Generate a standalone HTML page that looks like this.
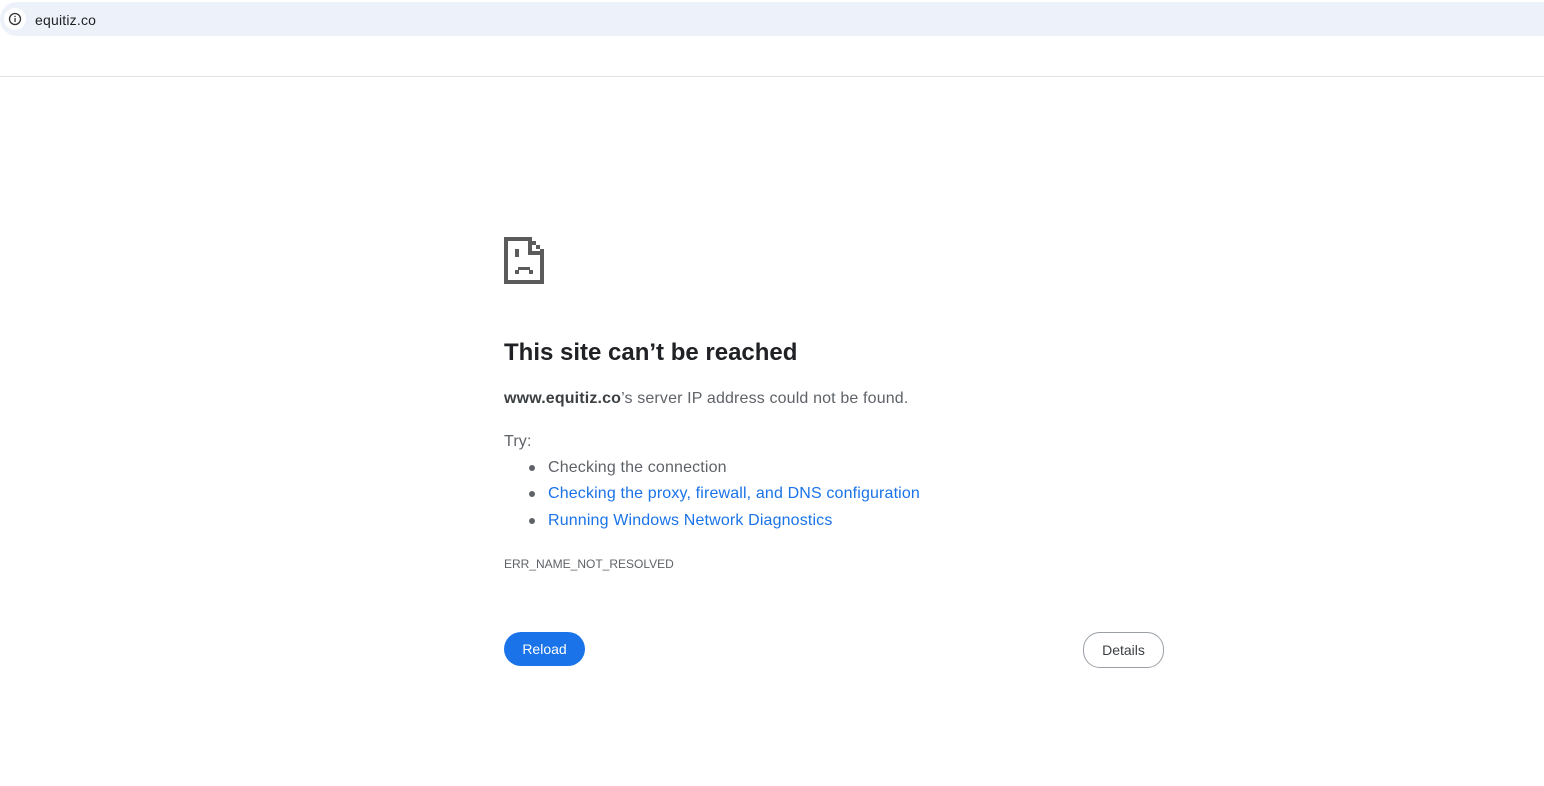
<!DOCTYPE html>
<html><head><style>
body{margin:0;width:1544px;height:786px;background:#fff;font-family:"Liberation Sans",sans-serif;position:relative;overflow:hidden}
.bar{position:absolute;left:0;top:2px;width:1544px;height:34px;background:#edf1f9;border-radius:17px 0 0 17px}
.ic{position:absolute;left:4px;top:6px;width:22px;height:22px;border-radius:50%;background:#fff}
.url{position:absolute;left:35px;top:10px;font-size:14px;color:#1f1f1f;letter-spacing:.2px}
.line{position:absolute;left:0;top:76px;width:1544px;height:1px;background:#e3e3e3}
.t{position:absolute;left:504px;color:#5f6368;letter-spacing:.15px}
h1{position:absolute;left:504px;top:339px;margin:0;font-size:24px;font-weight:bold;color:#202124}
.a{color:#1a73e8}
.dot{position:absolute;left:529px;width:6px;height:6px;border-radius:50%;background:#5f6368}
.btn{position:absolute;top:632px;height:34px;border-radius:17px;font-size:14px;box-sizing:border-box;text-align:center;line-height:34px}
</style></head><body>
<div class="bar"><div class="ic"><svg width="22" height="22" viewBox="0 0 22 22"><circle cx="11" cy="11" r="5.5" fill="none" stroke="#333" stroke-width="1.3"/><rect x="10.4" y="10" width="1.3" height="4" fill="#333"/><rect x="10.4" y="7.8" width="1.3" height="1.3" fill="#333"/></svg></div><div class="url">equitiz.co</div></div>
<div class="line"></div>
<svg style="position:absolute;left:504px;top:237px" width="41" height="48" viewBox="0 0 41 48">
<g fill="#5b5b5b">
<rect x="0" y="0" width="24" height="4"/><rect x="0" y="0" width="4" height="47"/><rect x="0" y="43" width="40" height="4"/><rect x="36" y="15" width="4" height="32"/>
<rect x="24" y="0" width="4" height="18"/><rect x="24" y="14" width="16" height="4"/>
<rect x="28" y="4" width="4" height="4"/><rect x="32" y="8" width="4" height="4"/><rect x="36" y="12" width="4" height="4"/>
<rect x="11" y="12" width="4" height="8"/>
<rect x="14" y="30" width="12" height="3"/><rect x="11" y="33" width="4" height="4"/><rect x="25" y="33" width="4" height="4"/>
</g></svg>
<h1>This site can’t be reached</h1>
<div class="t" style="top:390px;font-size:16px"><b style="color:#3c4043">www.equitiz.co</b>’s server IP address could not be found.</div>
<div class="t" style="top:433px;font-size:16px">Try:</div>
<div class="dot" style="top:465px"></div><div class="t" style="left:548px;top:459px;font-size:16px">Checking the connection</div>
<div class="dot" style="top:491px"></div><div class="t a" style="left:548px;top:485px;font-size:16px">Checking the proxy, firewall, and DNS configuration</div>
<div class="dot" style="top:518px"></div><div class="t a" style="left:548px;top:512px;font-size:16px">Running Windows Network Diagnostics</div>
<div class="t" style="top:557px;font-size:12px;letter-spacing:0">ERR_NAME_NOT_RESOLVED</div>
<div class="btn" style="left:504px;width:81px;background:#1a73e8;color:#fff">Reload</div>
<div class="btn" style="left:1083px;width:81px;height:36px;border:1px solid #9aa0a6;color:#3c4043;line-height:34px">Details</div>
</body></html>
